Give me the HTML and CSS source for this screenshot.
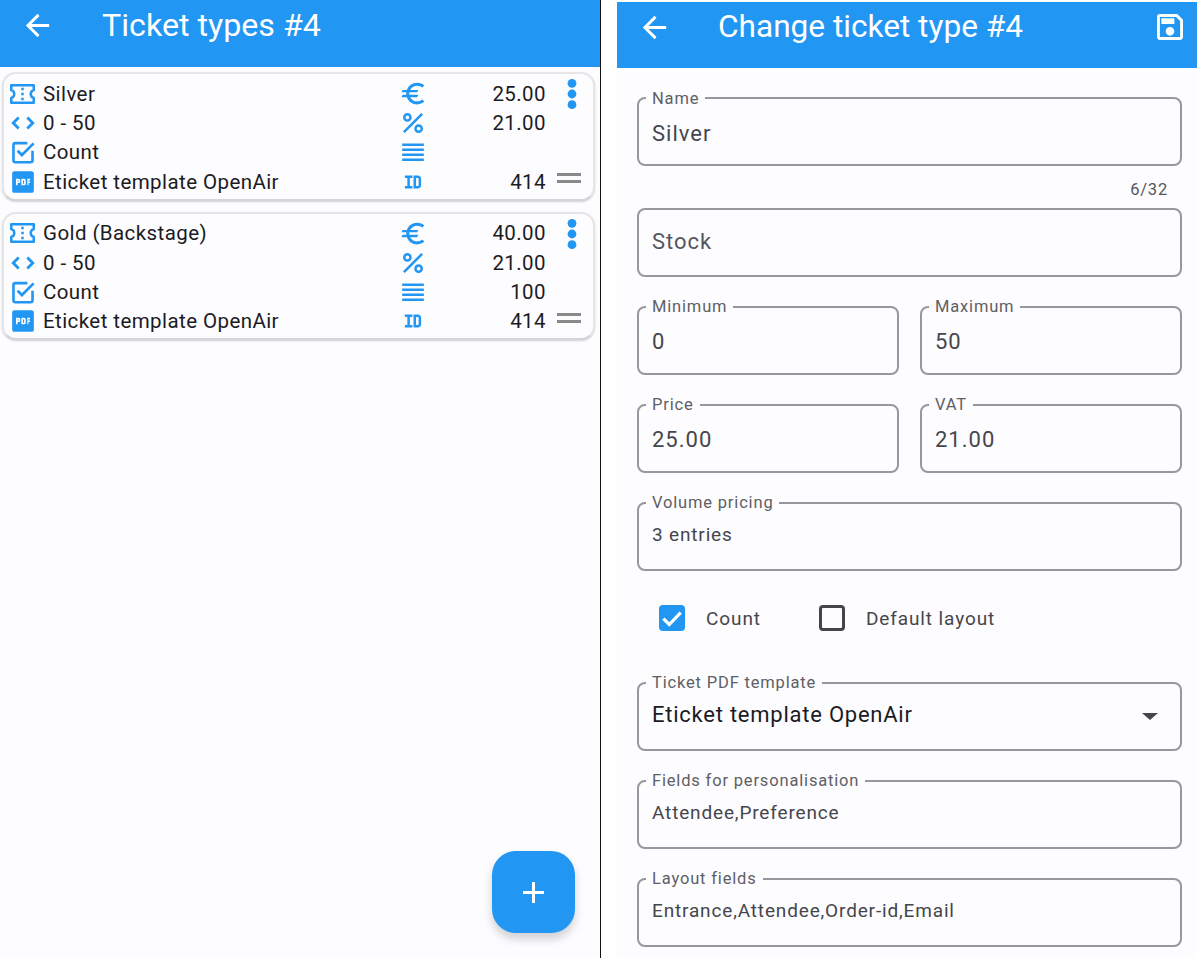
FILE: index.html
```html
<!DOCTYPE html>
<html lang="en">
<head>
<meta charset="utf-8">
<title>Ticket types</title>
<link rel="stylesheet" href="styles.css">
</head>
<body>
<svg class="defs" width="0" height="0" aria-hidden="true">
  <symbol id="i-back" viewBox="0 0 24 24"><path fill="currentColor" d="M20 11H7.830l5.590-5.590L12 4l-8 8 8 8 1.410-1.410L7.830 13H20v-2z"/></symbol>
  <symbol id="i-ticket" viewBox="2 4 20 16"><path fill="none" stroke="currentColor" stroke-width="2" stroke-linejoin="round" d="M3 5h18v3.900a3.200 3.200 0 0 0 0 6.200V19H3v-3.900a3.200 3.200 0 0 0 0-6.200z"/><path fill="currentColor" d="M11 7h2v2h-2zM11 11h2v2h-2zM11 15h2v2h-2z"/></symbol>
  <symbol id="i-code" viewBox="0 0 24 24"><path fill="none" stroke="currentColor" stroke-width="2.600" d="M8 7l-5 5 5 5M16 7l5 5-5 5"/></symbol>
  <symbol id="i-check" viewBox="0 0 24 24"><path fill="none" stroke="currentColor" stroke-width="2.400" d="M16 3.800H5A1.800 1.800 0 0 0 3.200 5.600v14A1.800 1.800 0 0 0 5 21.400h14a1.800 1.800 0 0 0 1.800-1.800v-8.800"/><path fill="none" stroke="currentColor" stroke-width="2.500" d="M7 10.800l4 4L21.800 4"/></symbol>
  <symbol id="i-pdf" viewBox="0 0 24 24"><path fill="currentColor" d="M20 2H4c-1.100 0-2 .9-2 2v16c0 1.100.9 2 2 2h16c1.100 0 2-.9 2-2V4c0-1.100-.9-2-2-2zM9.500 11.500c0 .83-.67 1.500-1.500 1.500H7v2H5.500V9H8c.83 0 1.500.67 1.500 1.500v1zm5 2c0 .83-.67 1.500-1.500 1.500h-2.500V9H13c.83 0 1.500.67 1.500 1.500v3zm4-3h-1.500v1h1.500V13h-1.500v2H16V9h2.500v1.500zM7 10.500h1v1H7v-1zm5 0h1v3h-1v-3z"/></symbol>
  <symbol id="i-euro" viewBox="0 0 24 24"><path fill="currentColor" d="M15 18.500c-2.510 0-4.680-1.420-5.760-3.500H15l1-2H8.580c-.05-.33-.08-.66-.08-1s.03-.67.08-1H15l1-2H9.240C10.320 6.920 12.500 5.500 15 5.500c1.610 0 3.090.59 4.230 1.570L21 5.300C19.410 3.870 17.300 3 15 3c-3.920 0-7.240 2.510-8.480 6H3l-1 2h4.060c-.04.33-.06.66-.06 1s.02.67.06 1H3l-1 2h4.520c1.240 3.490 4.560 6 8.480 6 2.310 0 4.410-.87 6-2.300l-1.780-1.770c-1.130.98-2.600 1.570-4.220 1.570z"/></symbol>
  <symbol id="i-percent" viewBox="0 0 24 24"><path fill="currentColor" d="M7.500 4C5.570 4 4 5.570 4 7.500S5.570 11 7.500 11 11 9.430 11 7.500 9.430 4 7.500 4zm0 5C6.670 9 6 8.330 6 7.500S6.670 6 7.500 6 9 6.670 9 7.500 8.330 9 7.500 9zm9 4c-1.930 0-3.500 1.570-3.500 3.500s1.570 3.500 3.500 3.500 3.500-1.570 3.500-3.500-1.570-3.500-3.500-3.500zm0 5c-.83 0-1.500-.67-1.500-1.500s.67-1.500 1.500-1.500 1.500.67 1.500 1.500-.67 1.500-1.500 1.500zM5.410 20 4 18.590 18.590 4 20 5.410 5.410 20z"/></symbol>
  <symbol id="i-lines" viewBox="0 0 24 24"><path fill="currentColor" d="M2 4.200h20v2.200H2zM2 8.800h20v2.200H2zM2 13.400h20v2.200H2zM2 18h20v2.200H2z"/></symbol>
  <symbol id="i-id" viewBox="0 0 24 24"><path fill="currentColor" d="M4.500 6h7v2.200H9.100v7.600h2.400V18h-7v-2.200h2.300V8.200H4.500zM12.500 6h4c1.700 0 3 1.300 3 3v6c0 1.700-1.300 3-3 3h-4zm2.300 2.200v7.600h1.700c.4 0 .7-.3.7-.7V8.900c0-.4-.3-.7-.7-.7z"/></symbol>
  <symbol id="i-more" viewBox="0 0 24 24"><circle fill="currentColor" cx="12" cy="4" r="3.300"/><circle fill="currentColor" cx="12" cy="12" r="3.300"/><circle fill="currentColor" cx="12" cy="20" r="3.300"/></symbol>
  <symbol id="i-save" viewBox="3 3 18 18"><path fill="currentColor" d="M17 3H5c-1.110 0-2 .9-2 2v14c0 1.100.89 2 2 2h14c1.100 0 2-.9 2-2V7l-4-4zm2 16H5V5h11.170L19 7.830V19zm-7-7c-1.660 0-3 1.340-3 3s1.340 3 3 3 3-1.340 3-3-1.340-3-3-3zM6 6h9v4H6z"/></symbol>
</svg>
<main class="screen">
  <section class="pane pane-left">
    <header class="appbar appbar-left">
      <svg class="back"><use href="#i-back"/></svg>
      <h1 class="title">Ticket types #4</h1>
    </header>
    <div class="cards">
      <article class="card">
        <div class="row"><svg class="ic ic-ticket"><use href="#i-ticket"/></svg><span class="txt">Silver</span><svg class="ic ic-euro"><use href="#i-euro"/></svg><span class="val">25.00</span></div>
        <div class="row"><svg class="ic"><use href="#i-code"/></svg><span class="txt">0 - 50</span><svg class="ic ic-percent"><use href="#i-percent"/></svg><span class="val">21.00</span></div>
        <div class="row"><svg class="ic"><use href="#i-check"/></svg><span class="txt">Count</span><svg class="ic"><use href="#i-lines"/></svg><span class="val"></span></div>
        <div class="row"><svg class="ic"><use href="#i-pdf"/></svg><span class="txt">Eticket template OpenAir</span><svg class="ic"><use href="#i-id"/></svg><span class="val">414</span></div>
        <svg class="more"><use href="#i-more"/></svg>
        <span class="handle"></span>
      </article>
      <article class="card">
        <div class="row"><svg class="ic ic-ticket"><use href="#i-ticket"/></svg><span class="txt">Gold (Backstage)</span><svg class="ic ic-euro"><use href="#i-euro"/></svg><span class="val">40.00</span></div>
        <div class="row"><svg class="ic"><use href="#i-code"/></svg><span class="txt">0 - 50</span><svg class="ic ic-percent"><use href="#i-percent"/></svg><span class="val">21.00</span></div>
        <div class="row"><svg class="ic"><use href="#i-check"/></svg><span class="txt">Count</span><svg class="ic"><use href="#i-lines"/></svg><span class="val">100</span></div>
        <div class="row"><svg class="ic"><use href="#i-pdf"/></svg><span class="txt">Eticket template OpenAir</span><svg class="ic"><use href="#i-id"/></svg><span class="val">414</span></div>
        <svg class="more"><use href="#i-more"/></svg>
        <span class="handle"></span>
      </article>
    </div>
    <button class="fab" type="button" aria-label="Add"><span class="plus"></span></button>
  </section>
  <div class="divider"></div>
  <section class="pane pane-right">
    <header class="appbar appbar-right">
      <svg class="back"><use href="#i-back"/></svg>
      <h1 class="title">Change ticket type #4</h1>
      <svg class="save"><use href="#i-save"/></svg>
    </header>
    <form class="form">
      <div class="field field-name"><span class="label">Name</span><span class="value">Silver</span></div>
      <div class="counter">6/32</div>
      <div class="field"><span class="value placeholder">Stock</span></div>
      <div class="pair">
        <div class="field"><span class="label">Minimum</span><span class="value">0</span></div>
        <div class="field"><span class="label">Maximum</span><span class="value">50</span></div>
      </div>
      <div class="pair">
        <div class="field"><span class="label">Price</span><span class="value">25.00</span></div>
        <div class="field"><span class="label">VAT</span><span class="value">21.00</span></div>
      </div>
      <div class="field"><span class="label">Volume pricing</span><span class="value small">3 entries</span></div>
      <div class="checks">
        <span class="check check-on"><svg class="tick" viewBox="0 0 24 24"><path fill="none" stroke="#fff" stroke-width="3" d="M4 12.500l5.500 5.500L20 7"/></svg></span><span class="check-label first">Count</span>
        <span class="check"></span><span class="check-label">Default layout</span>
      </div>
      <div class="field"><span class="label">Ticket PDF template</span><span class="value dark">Eticket template OpenAir</span><span class="caret"></span></div>
      <div class="field"><span class="label">Fields for personalisation</span><span class="value small">Attendee,Preference</span></div>
      <div class="field"><span class="label">Layout fields</span><span class="value small">Entrance,Attendee,Order-id,Email</span></div>
    </form>
  </section>
</main>
</body>
</html>
```

FILE: styles.css
```css
* { box-sizing: border-box; }
html, body { margin: 0; padding: 0; background: #fff; }
body { font-family: Roboto, "Liberation Sans", sans-serif; width: 1200px; height: 960px; overflow: hidden; }
.defs { position: absolute; }
.screen { display: flex; height: 958px; }
.pane { position: relative; background: #fdfcff; height: 958px; }
.pane-left { width: 600px; }
.divider { width: 1px; background: #111; }
.pane-right { width: 596px; padding-left: 16px; background: #fff; }
.appbar { display: flex; align-items: flex-start; background: #2196f3; color: #fff; }
.appbar-left { height: 67px; padding: 8px 0 0 19.500px; }
.appbar-right { height: 66px; margin-top: 2px; width: 580px; padding: 8px 0 0 19.500px; }
.back { width: 35px; height: 35px; flex: none; }
.appbar-left .title { margin: 1px 0 0 47.500px; font-size: 32.200px; }
.appbar-right .title { margin: 1px 0 0 46.500px; flex: 1; font-size: 31.600px; }
.title { font-weight: 400; line-height: 32px; white-space: nowrap; }
.save { width: 26px; height: 26px; margin: 4px 14px 0 0; flex: none; }
.cards { display: flex; flex-direction: column; gap: 11.100px; padding: 5px 5px 0 2px; }
.card { position: relative; height: 128.500px; border: 2px solid #e6e5e8; border-bottom-color: #d5d4d7; border-radius: 14px; background: #fdfcff; padding: 5px 47px 0 5.500px; box-shadow: 0 1px 2px rgba(0,0,0,.18); }
.row { display: flex; align-items: center; height: 29.400px; color: #1b1b1f; }
.ic { width: 26px; height: 26px; color: #2196f3; flex: none; }
.ic-ticket { width: 25px; height: 20px; margin: 0 .5px; }
.ic-euro { width: 29px; height: 29px; margin: -2px -1.500px; }
.ic-percent { width: 30px; height: 30px; margin: -2px -2px; }
.txt { font-size: 20.500px; margin-left: 7.500px; width: 357px; white-space: nowrap; letter-spacing: .42px; }
.val { flex: 1; text-align: right; font-size: 20.500px; letter-spacing: .42px; }
.more { position: absolute; top: 2px; right: 5px; width: 32px; height: 36px; color: #2196f3; }
.handle { position: absolute; right: 12px; top: 99px; width: 24px; height: 10px; border-top: 3px solid #8a8a8a; border-bottom: 3px solid #8a8a8a; }
.fab { position: absolute; left: 492px; top: 851px; width: 83px; height: 82px; border: 0; border-radius: 24px; background: #2196f3; box-shadow: 0 6px 10px rgba(0,0,0,.18); padding: 0; }
.plus { position: absolute; left: 31px; top: 40px; width: 21px; height: 3px; background: #fff; }
.plus::after { content: ""; position: absolute; left: 9px; top: -9px; width: 3px; height: 21px; background: #fff; }
.form { background: #fdfcff; width: 580px; height: 890px; padding: 29px 15px 0 20px; }
.field { position: relative; height: 69px; border: 2px solid #97979d; border-radius: 8px; flex: 1; margin-bottom: 29px; padding-left: 13px; display: flex; align-items: center; }
.label { position: absolute; left: 7px; top: -11px; padding: 0 6px; background: #fdfcff; font-size: 16.500px; line-height: 20px; color: #5e5f65; letter-spacing: .83px; white-space: nowrap; }
.field-name .label { top: -10px; }
.value { font-size: 22px; color: #45464c; letter-spacing: 1px; white-space: nowrap; padding-top: 1px; }
.field-name .value { padding-top: 3px; }
.value.small { font-size: 19px; letter-spacing: .84px; padding: 0 0 5px; }
.value.dark { color: #1b1b1f; font-size: 22px; letter-spacing: .76px; padding: 0 0 4px; }
.value.placeholder { color: #55565c; padding: 0 0 2px; }
.counter { font-size: 16.500px; line-height: 20px; color: #55565c; text-align: right; margin: -15px 14px 0 0; height: 28px; letter-spacing: .8px; }
.pair { display: flex; gap: 21px; }
.checks { display: flex; align-items: center; height: 40px; margin: -2px 0 44px 22px; }
.check { width: 26px; height: 26px; border: 3px solid #44454a; border-radius: 4px; flex: none; }
.check-on { background: #2196f3; border: 0; display: flex; align-items: center; justify-content: center; }
.tick { width: 26px; height: 26px; }
.check-label { font-size: 19px; color: #45464c; letter-spacing: .9px; margin-left: 21px; }
.check-label.first { margin-right: 58px; }
.caret { position: absolute; right: 22px; top: 29px; border-left: 8px solid transparent; border-right: 8px solid transparent; border-top: 7px solid #45464c; }
```
